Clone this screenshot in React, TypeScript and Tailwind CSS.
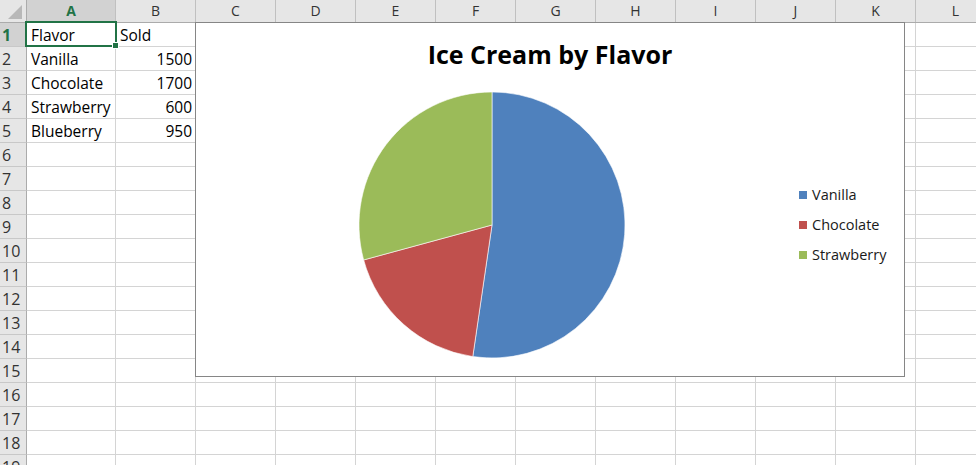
import React from "react";

const columns = ["A", "B", "C", "D", "E", "F", "G", "H", "I", "J", "K", "L"];

const cells: Record<string, string> = {
  A1: "Flavor",
  B1: "Sold",
  A2: "Vanilla",
  B2: "1500",
  A3: "Chocolate",
  B3: "1700",
  A4: "Strawberry",
  B4: "600",
  A5: "Blueberry",
  B5: "950",
};

const slices = [
  { label: "Vanilla", value: 1700, color: "#4f81bd" },
  { label: "Chocolate", value: 600, color: "#c0504d" },
  { label: "Strawberry", value: 950, color: "#9bbb59" },
];

const PieChart = () => {
  const cx = 134;
  const cy = 134;
  const r = 133;
  const total = slices.reduce((s, d) => s + d.value, 0);
  let angle = 0;

  return (
    <svg width="268" height="268" viewBox="0 0 268 268" className="ml-[162px] shrink-0">
      {slices.map((d) => {
        const a0 = angle;
        const a1 = angle + (d.value / total) * Math.PI * 2;
        angle = a1;
        const x0 = cx + r * Math.sin(a0);
        const y0 = cy - r * Math.cos(a0);
        const x1 = cx + r * Math.sin(a1);
        const y1 = cy - r * Math.cos(a1);
        const large = a1 - a0 > Math.PI ? 1 : 0;
        return (
          <path
            key={d.label}
            d={`M ${cx} ${cy} L ${x0} ${y0} A ${r} ${r} 0 ${large} 1 ${x1} ${y1} Z`}
            fill={d.color}
            stroke="#ffffff"
            strokeWidth="0.6"
          />
        );
      })}
    </svg>
  );
};

const Chart = () => {
  return (
    <div className="absolute left-[195px] top-[22px] w-[710px] h-[355px] border border-[#868686] bg-white flex flex-col">
      <div className="h-[68px] pt-[14px] text-center text-[25px] leading-[34px] font-bold text-black">
        Ice Cream by Flavor
      </div>
      <div className="flex">
        <PieChart />
        <div className="ml-[173px] mt-[89px] flex flex-col">
          {slices.map((d) => (
            <div key={d.label} className="h-[30px] flex items-center gap-[5px]">
              <span className="w-[8px] h-[8px]" style={{ backgroundColor: d.color }} />
              <span className="text-[14.5px] leading-[30px] text-[#1a1a1a] -mt-[1px]">{d.label}</span>
            </div>
          ))}
        </div>
      </div>
    </div>
  );
};

const HeaderRow = () => {
  return (
    <div className="flex h-[23px] bg-[#e6e6e6] border-b border-[#ababab]">
      <div className="relative w-[27px] shrink-0 border-r border-[#ababab]">
        <svg width="27" height="22" className="absolute left-0 top-0">
          <polygon points="22,5 22,19 8,19" fill="#b8b8b8" />
        </svg>
      </div>
      {columns.map((c) => (
        <div
          key={c}
          className={
            c === "A"
              ? "w-[89px] shrink-0 bg-[#d2d2d2] border-r border-[#c0c0c0] text-center text-[14px] leading-[22px] font-bold text-[#217346]"
              : "w-[80px] shrink-0 border-r border-[#c0c0c0] text-center text-[14px] leading-[22px] text-[#333]"
          }
        >
          {c}
        </div>
      ))}
    </div>
  );
};

const Row = ({ n }: { n: number }) => {
  return (
    <div className="flex h-[24px] shrink-0">
      <div
        className={
          n === 1
            ? "w-[27px] shrink-0 bg-[#d2d2d2] border-r border-b border-r-[#ababab] border-b-[#c8c8c8] pl-[2px] text-[16px] leading-[24px] font-bold text-[#217346]"
            : "w-[27px] shrink-0 bg-[#e6e6e6] border-r border-b border-r-[#ababab] border-b-[#c8c8c8] pl-[2px] text-[16px] leading-[24px] text-[#333]"
        }
      >
        {n}
      </div>
      {columns.map((c) => {
        const v = cells[`${c}${n}`] ?? "";
        const numeric = v !== "" && !isNaN(Number(v));
        return (
          <div
            key={c}
            className={
              (c === "A" ? "w-[89px] " : "w-[80px] ") +
              (numeric ? "text-right pr-[3px] " : "text-left pl-[4px] ") +
              "shrink-0 border-r border-b border-[#d4d4d4] text-[15.5px] leading-[24px] text-black whitespace-nowrap overflow-visible"
            }
          >
            {v}
          </div>
        );
      })}
    </div>
  );
};

const App = () => {
  const rows = Array.from({ length: 19 }, (_, i) => i + 1);
  return (
    <div className="relative w-[976px] h-[465px] overflow-hidden bg-white font-['Open_Sans',sans-serif]">
      <div className="flex flex-col w-[1100px]">
        <HeaderRow />
        {rows.map((n) => (
          <Row key={n} n={n} />
        ))}
      </div>
      <Chart />
      {/* selected cell A1 */}
      <div className="absolute left-[25px] top-[21px] w-[92px] h-[26px] border-2 border-[#217346]" />
      <div className="absolute left-[112px] top-[42px] w-[7px] h-[7px] bg-[#217346] border border-white" />
    </div>
  );
};

export default App;
